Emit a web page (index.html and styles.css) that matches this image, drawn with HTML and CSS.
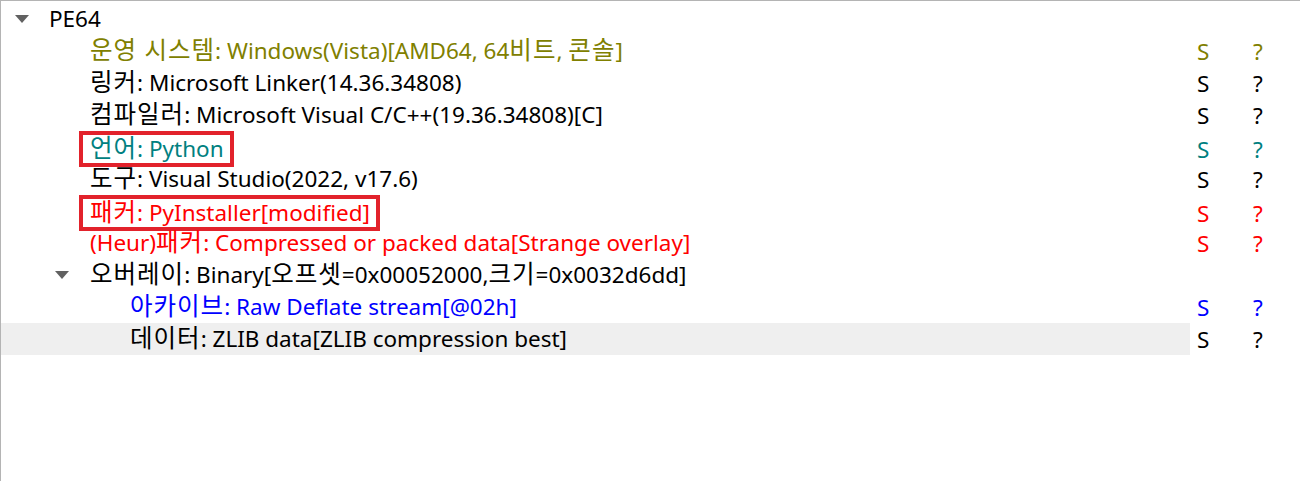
FILE: index.html
```html
<!DOCTYPE html>
<html lang="ko">
<head>
  <meta charset="UTF-8" />
  <title>PE64</title>
  <link rel="stylesheet" href="styles.css">
</head>
<body>
  <div class="tree">
    <div class="row">
      <div class="name lv0"><span class="branch open"></span><span>PE64</span></div>
      <div class="col"></div>
      <div class="col"></div>
    </div>
    <div class="row olive">
      <div class="name lv1"><span class="branch"></span><span><span class="ko">운영 시스템</span>: Windows(Vista)[AMD64, 64<span class="ko">비트</span>, <span class="ko">콘솔</span>]</span></div>
      <div class="col">S</div>
      <div class="col">?</div>
    </div>
    <div class="row">
      <div class="name lv1"><span class="branch"></span><span><span class="ko">링커</span>: Microsoft Linker(14.36.34808)</span></div>
      <div class="col">S</div>
      <div class="col">?</div>
    </div>
    <div class="row">
      <div class="name lv1"><span class="branch"></span><span><span class="ko">컴파일러</span>: Microsoft Visual C/C++(19.36.34808)[C]</span></div>
      <div class="col">S</div>
      <div class="col">?</div>
    </div>
    <div class="row teal">
      <div class="name lv1"><span class="branch"></span><span class="mark"><span class="ko">언어</span>: Python</span></div>
      <div class="col">S</div>
      <div class="col">?</div>
    </div>
    <div class="row">
      <div class="name lv1"><span class="branch"></span><span><span class="ko">도구</span>: Visual Studio(2022, v17.6)</span></div>
      <div class="col">S</div>
      <div class="col">?</div>
    </div>
    <div class="row red">
      <div class="name lv1"><span class="branch"></span><span class="mark"><span class="ko">패커</span>: PyInstaller[modified]</span></div>
      <div class="col">S</div>
      <div class="col">?</div>
    </div>
    <div class="row red">
      <div class="name lv1"><span class="branch"></span><span>(Heur)<span class="ko">패커</span>: Compressed or packed data[Strange overlay]</span></div>
      <div class="col">S</div>
      <div class="col">?</div>
    </div>
    <div class="row">
      <div class="name lv1"><span class="branch open"></span><span><span class="ko">오버레이</span>: Binary[<span class="ko">오프셋</span>=0x00052000,<span class="ko">크기</span>=0x0032d6dd]</span></div>
      <div class="col"></div>
      <div class="col"></div>
    </div>
    <div class="row blue">
      <div class="name lv2"><span class="branch"></span><span><span class="ko">아카이브</span>: Raw Deflate stream[@02h]</span></div>
      <div class="col">S</div>
      <div class="col">?</div>
    </div>
    <div class="row selected">
      <div class="name lv2"><span class="branch"></span><span><span class="ko">데이터</span>: ZLIB data[ZLIB compression best]</span></div>
      <div class="col">S</div>
      <div class="col">?</div>
    </div>
  </div>
</body>
</html>
```

FILE: styles.css
```css
body {
  margin: 0;
  background-color: #ffffff;
  font-family: 'Noto Sans', 'Noto Sans CJK KR', sans-serif;
  font-size: 22.5px;
  color: #000000;
  overflow: hidden;
}

.tree {
  height: 480px;
  border-top: 1px solid #b4b4b4;
  border-left: 1px solid #b4b4b4;
  padding-top: 2px;
}

.row {
  display: grid;
  grid-template-columns: 1189px 56px 1fr;
  height: 32px;
  align-items: stretch;
}

.name {
  display: flex;
  align-items: center;
  white-space: nowrap;
  line-height: 28px;
}

.lv0 { padding-left: 14px; }
.lv1 { padding-left: 54px; }
.lv2 { padding-left: 94px; }

.branch {
  flex: none;
  width: 35px;
  height: 32px;
  position: relative;
}

.lv0 .branch { width: 34px; }

.branch.open::before {
  content: '';
  position: absolute;
  left: 0;
  top: 12px;
  border-left: 7px solid transparent;
  border-right: 7px solid transparent;
  border-top: 8px solid #616161;
}

.ko {
  font-size: 24.5px;
  letter-spacing: 1px;
  line-height: 1;
}

.col {
  display: flex;
  align-items: center;
  padding-left: 7px;
}

.selected .name {
  background-color: #efefef;
}

.olive { color: #808000; }
.teal  { color: #008080; }
.red   { color: #ff0000; }
.blue  { color: #0000ff; }

.mark {
  display: inline-block;
  border: 4px solid #e2222b;
  padding: 0 6px 0 7px;
  margin-left: -11px;
}
```
